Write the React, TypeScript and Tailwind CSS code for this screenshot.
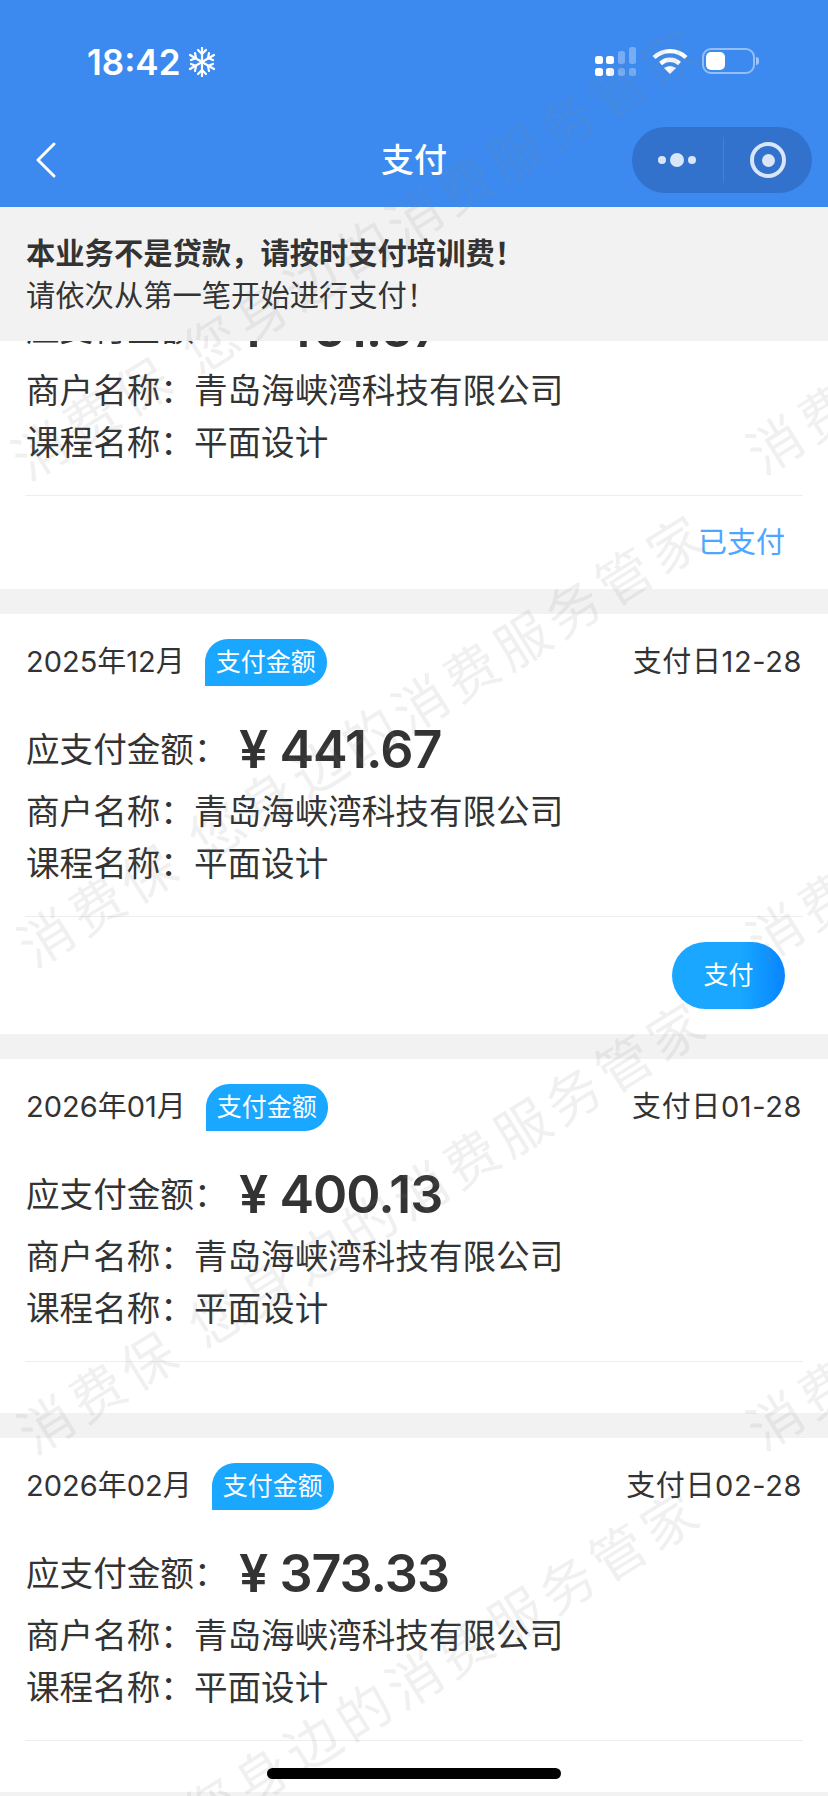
const cjk = "font-['Inter','Noto_Sans_CJK_SC',sans-serif]";

type Payment = {
  month?: string;
  due?: string;
  amount: string;
  action?: "paid" | "pay";
};

const payments: Payment[] = [
  { amount: "451.67", action: "paid" },
  { month: "2025年12月", due: "支付日12-28", amount: "441.67", action: "pay" },
  { month: "2026年01月", due: "支付日01-28", amount: "400.13" },
  { month: "2026年02月", due: "支付日02-28", amount: "373.33" },
];

// watermark rows, left edge sits on the first character
const watermarks = [
  "left-[18px] top-[442px]",
  "left-[24px] top-[929px]",
  "left-[24px] top-[1416px]",
  "left-[18px] top-[1905px]",
  "left-[753px] top-[436px]",
  "left-[753px] top-[924px]",
  "left-[753px] top-[1412px]",
];

const StatusBar = () => (
  <div className="h-[127px] pl-[87px] pt-[40px] flex items-start">
    <span className="text-[35px] leading-[44px] font-semibold text-white font-['Inter',sans-serif]">18:42</span>
    <svg className="w-[28px] h-[30px] ml-[8px] mt-[7px]" viewBox="0 0 28 30" fill="none" stroke="white" strokeWidth="2.2" strokeLinecap="round">
      <path d="M14 1v28M2 8l24 14M26 8L2 22" />
      <path d="M10 3l4 4 4-4M10 27l4-4 4 4M3 13l5-2-1-5M25 17l-5 2 1 5M25 13l-5-2 1-5M3 17l5 2-1 5" />
    </svg>
    <div className="ml-auto flex items-start">
      <svg className="w-[42px] h-[30px] mt-[7px]" viewBox="0 0 42 30" fill="white">
        <rect x="1" y="9" width="8" height="8" rx="2.5" />
        <rect x="1" y="21" width="8" height="8" rx="2.5" />
        <rect x="12" y="9" width="8" height="8" rx="2.5" />
        <rect x="12" y="21" width="8" height="8" rx="2.5" />
        <rect x="24" y="4" width="7" height="13" rx="2.5" opacity="0.3" />
        <rect x="24" y="21" width="7" height="8" rx="2.5" opacity="0.3" />
        <rect x="35" y="0" width="7" height="17" rx="2.5" opacity="0.3" />
        <rect x="35" y="21" width="7" height="8" rx="2.5" opacity="0.3" />
      </svg>
      <svg className="w-[36px] h-[27px] ml-[16px] mt-[8px]" viewBox="0 0 36 27" fill="none" stroke="white" strokeWidth="4.4">
        <path d="M2 9.500C11 1 25 1 34 9.500" />
        <path d="M8.500 15.500c5.500-5 13.500-5 19 0" />
        <path d="M18 26l-6-6c3.500-2.500 8.500-2.500 12 0z" fill="white" stroke="none" />
      </svg>
      <div className="ml-[14px] mr-[69px] mt-[8px] flex items-center">
        <div className="w-[53px] h-[26px] rounded-[9px] border-2 border-white/45 p-[2px]">
          <div className="w-[19px] h-[18px] rounded-[5px] bg-white" />
        </div>
        <div className="w-[3px] h-[8px] ml-[1px] rounded-r-full bg-white/50" />
      </div>
    </div>
  </div>
);

const NavBar = () => (
  <div className="h-[80px] flex items-start relative">
    <svg className="w-[24px] h-[38px] ml-[34px] mt-[14px]" viewBox="0 0 24 38" fill="none" stroke="white" strokeWidth="3" strokeLinecap="round" strokeLinejoin="round">
      <path d="M20 3L4 19l16 16" />
    </svg>
    <div className={`absolute left-0 right-0 top-[10px] text-center text-[33px] leading-[46px] font-medium text-white ${cjk}`}>支付</div>
    <div className="ml-auto mr-[16px] w-[180px] h-[66px] rounded-full bg-[#3272cc] flex items-center">
      <div className="w-[91px] pl-[26px] flex items-center gap-[4px]">
        <div className="w-[8px] h-[8px] rounded-full bg-[#d8e6f8]" />
        <div className="w-[14px] h-[14px] rounded-full bg-[#d8e6f8]" />
        <div className="w-[8px] h-[8px] rounded-full bg-[#d8e6f8]" />
      </div>
      <div className="w-px h-[46px] bg-white/10" />
      <div className="flex-1 flex justify-center">
        <div className="w-[36px] h-[36px] rounded-full border-[4px] border-[#d8e6f8] flex items-center justify-center">
          <div className="w-[13px] h-[13px] rounded-full bg-[#d8e6f8]" />
        </div>
      </div>
    </div>
  </div>
);

const Card = ({ payment, first }: { payment: Payment; first?: boolean }) => (
  <section className={`bg-white px-[26px] ${first ? "-mt-[148px]" : "mt-[25px]"}`}>
    <div className="h-[96px] pt-[25px] flex items-start">
      {payment.month && (
        <>
          <span className="text-[29px] leading-[46px] text-[#333]">{payment.month}</span>
          <span className="ml-[20px] w-[122px] h-[47px] rounded-[23px] rounded-bl-none bg-[#1aa7ff] text-white text-[25px] leading-[46px] text-center">支付金额</span>
          <span className="ml-auto text-[29px] leading-[46px] tracking-[0.6px] text-[#333]">{payment.due}</span>
        </>
      )}
    </div>
    <div className="h-[60px] mt-[10px] flex items-center text-[33.600px] text-[#333]">
      <span className="w-[213px]">应支付金额：</span>
      <span className="text-[52px] leading-[60px] font-semibold tracking-[-1px]">¥ {payment.amount}</span>
    </div>
    <div className="mt-[6px] text-[33.600px] leading-[52px] text-[#333]">商户名称：青岛海峡湾科技有限公司</div>
    <div className="text-[33.600px] leading-[52px] text-[#333]">课程名称：平面设计</div>
    <div className="mt-[26px] border-t border-[#eee] -mx-px" />
    {payment.action === "paid" && (
      <div className="h-[93px] pt-[25px] pr-[17px] text-right text-[29px] leading-[44px] text-[#4da6ff]">已支付</div>
    )}
    {payment.action === "pay" && (
      <div className="h-[117px] pt-[25px] pr-[17px] flex justify-end">
        <button className="w-[113px] h-[67px] rounded-full bg-gradient-to-r from-[#1aa7ff] from-60% to-[#0a84ff] text-white text-[25px]">支付</button>
      </div>
    )}
    {!payment.action && <div className="h-[51px]" />}
  </section>
);

const App = () => {
  return (
    <div className={`relative w-[828px] h-[1796px] overflow-hidden bg-[#f2f2f2] ${cjk}`}>
      <header className="h-[207px] bg-[#3c8aef]">
        <StatusBar />
        <NavBar />
      </header>

      <div className="h-[134px] px-[26px] pt-[26px] bg-[#f2f2f2] text-[#333] text-[29.300px] leading-[42px] relative z-10">
        <div className="font-bold">本业务不是贷款，请按时支付培训费！</div>
        <div>请依次从第一笔开始进行支付！</div>
      </div>

      <main className="h-[1455px] overflow-hidden">
        {payments.map((payment, i) => (
          <Card key={i} payment={payment} first={i === 0} />
        ))}
      </main>

      {/* watermark over the whole page */}
      <div className="absolute inset-0 z-20 overflow-hidden pointer-events-none">
        {watermarks.map((pos) => (
          <span
            key={pos}
            className={`absolute ${pos} origin-left -rotate-[32deg] whitespace-pre text-[54px] leading-[48px] tracking-[6px] text-[#808080]/12 ${cjk}`}
          >
            消费保 您身边的消费服务管家
          </span>
        ))}
      </div>

      <div className="absolute z-30 left-[267px] top-[1768px] w-[294px] h-[11px] rounded-full bg-black" />
    </div>
  );
};

export default App;
